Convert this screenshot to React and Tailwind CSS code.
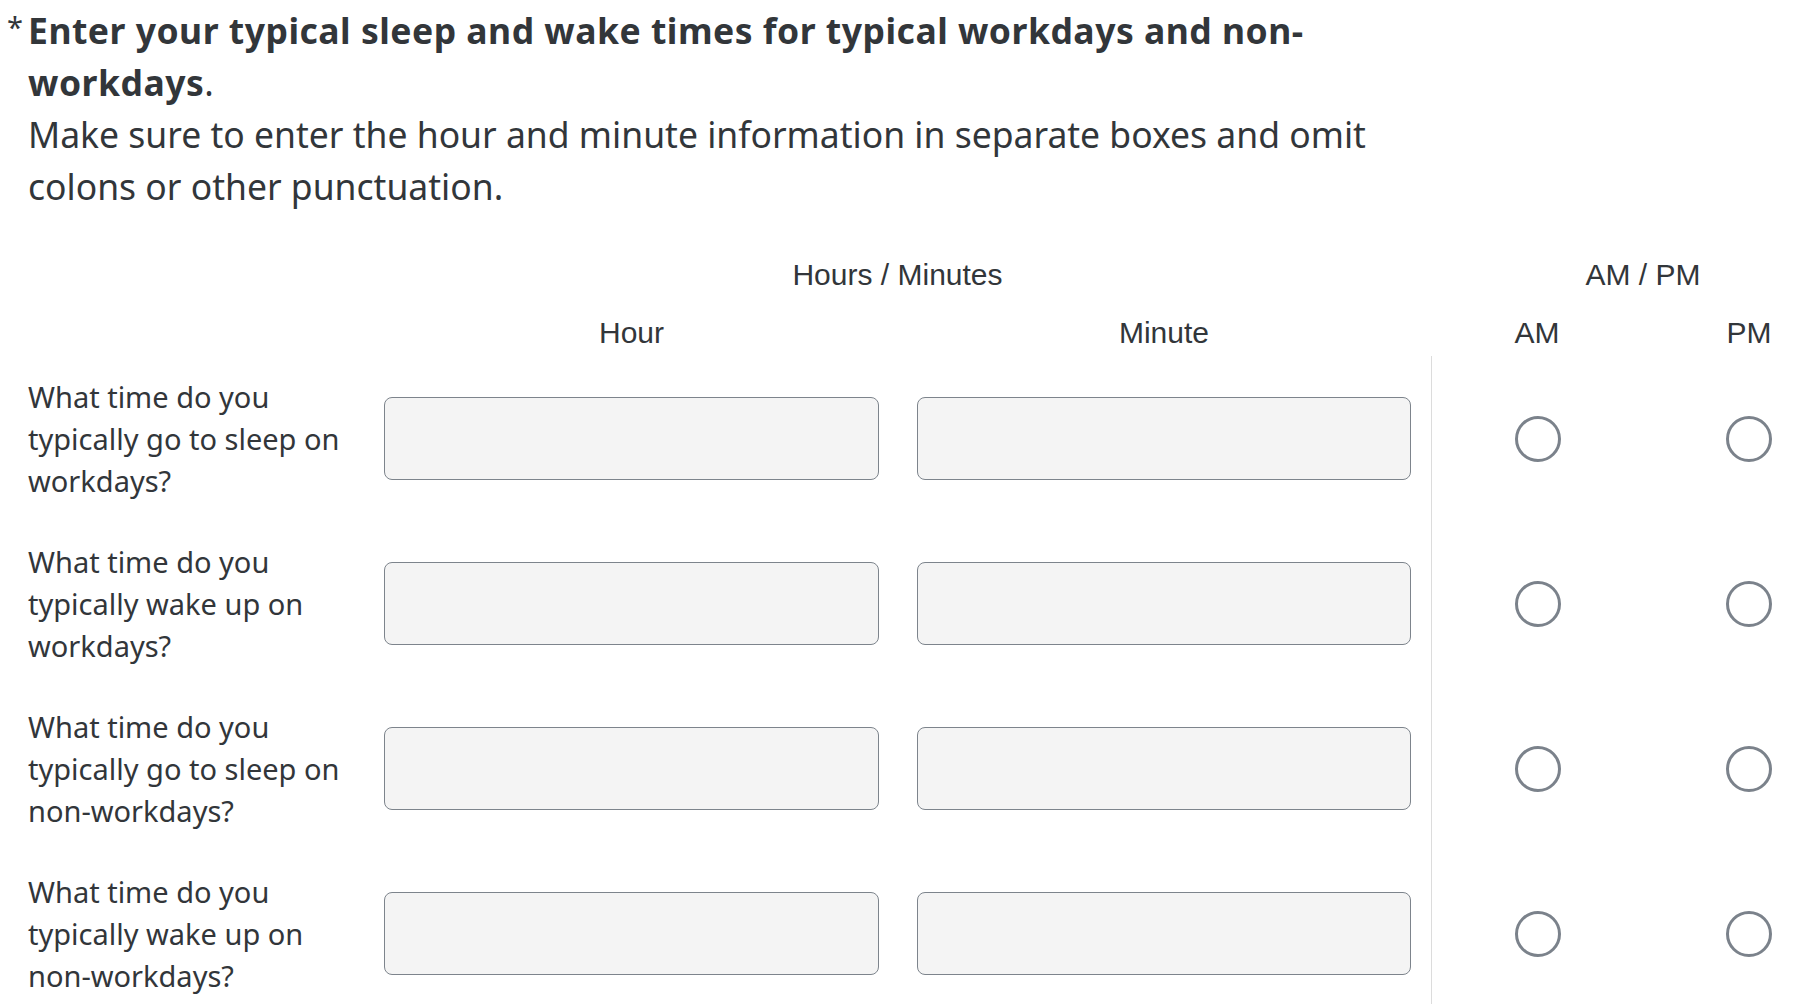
import React from "react";

const rows = [
  ["What time do you", "typically go to sleep on", "workdays?"],
  ["What time do you", "typically wake up on", "workdays?"],
  ["What time do you", "typically go to sleep on", "non-workdays?"],
  ["What time do you", "typically wake up on", "non-workdays?"],
];

function Radio() {
  return <div className="w-[46px] h-[46px] rounded-full border-[3px] border-[#7b828b] bg-white" />;
}

export default function App() {
  return (
    <div className="w-[1820px] h-[1004px] overflow-hidden bg-white text-[#32363a]">
      <div className="w-[1855px]">
        {/* Question text */}
        <div className="flex pt-[4px]">
          <div className="w-[28px] shrink-0 flex justify-end pr-[5px] text-[29px] leading-[46px]" style={{ fontFamily: '"Noto Sans", sans-serif' }}>
            *
          </div>
          <div className="w-[1395px] text-[35.5px] leading-[52px]" style={{ fontFamily: '"Noto Sans", sans-serif' }}>
            <div>
              <span className="font-bold tracking-[0.5px]">Enter your typical sleep and wake times for typical workdays and non-workdays</span>
              <span>.</span>
            </div>
            <div>Make sure to enter the hour and minute information in separate boxes and omit colons or other punctuation.</div>
          </div>
        </div>

        {/* Table */}
        <div className="mt-[33px]" style={{ fontFamily: '"Liberation Sans", Arial, sans-serif' }}>
          <div className="flex h-[58px] items-center text-[30px]">
            <div className="w-[384px] shrink-0" />
            <div className="w-[1027px] shrink-0 text-center">Hours / Minutes</div>
            <div className="w-[20px] shrink-0" />
            <div className="w-[424px] shrink-0 text-center">AM / PM</div>
          </div>
          <div className="flex h-[53px] items-center pt-[5px] text-[30px]">
            <div className="w-[384px] shrink-0" />
            <div className="w-[495px] shrink-0 text-center">Hour</div>
            <div className="w-[38px] shrink-0" />
            <div className="w-[494px] shrink-0 text-center">Minute</div>
            <div className="w-[20px] shrink-0" />
            <div className="w-[212px] shrink-0 text-center">AM</div>
            <div className="w-[212px] shrink-0 text-center">PM</div>
          </div>
        </div>

        {rows.map((r, i) => (
          <div key={i} className="flex h-[165px] items-stretch">
            <div className="w-[384px] shrink-0 flex items-center pl-[28px]">
              <div className="text-[29px] leading-[42px]" style={{ fontFamily: '"Noto Sans", sans-serif' }}>
                {r.map((l, j) => (
                  <div key={j}>{l}</div>
                ))}
              </div>
            </div>
            <div className="w-[495px] shrink-0 flex items-center">
              <div className="w-full h-[83px] rounded-[8px] border border-[#7d848c] bg-[#f4f4f4]" />
            </div>
            <div className="w-[38px] shrink-0" />
            <div className="w-[494px] shrink-0 flex items-center">
              <div className="w-full h-[83px] rounded-[8px] border border-[#7d848c] bg-[#f4f4f4]" />
            </div>
            <div className="w-[20px] shrink-0" />
            <div className="w-[212px] shrink-0 flex items-center justify-center border-l border-[#dcdcdc]">
              <Radio />
            </div>
            <div className="w-[212px] shrink-0 flex items-center justify-center">
              <Radio />
            </div>
          </div>
        ))}
      </div>
    </div>
  );
}
